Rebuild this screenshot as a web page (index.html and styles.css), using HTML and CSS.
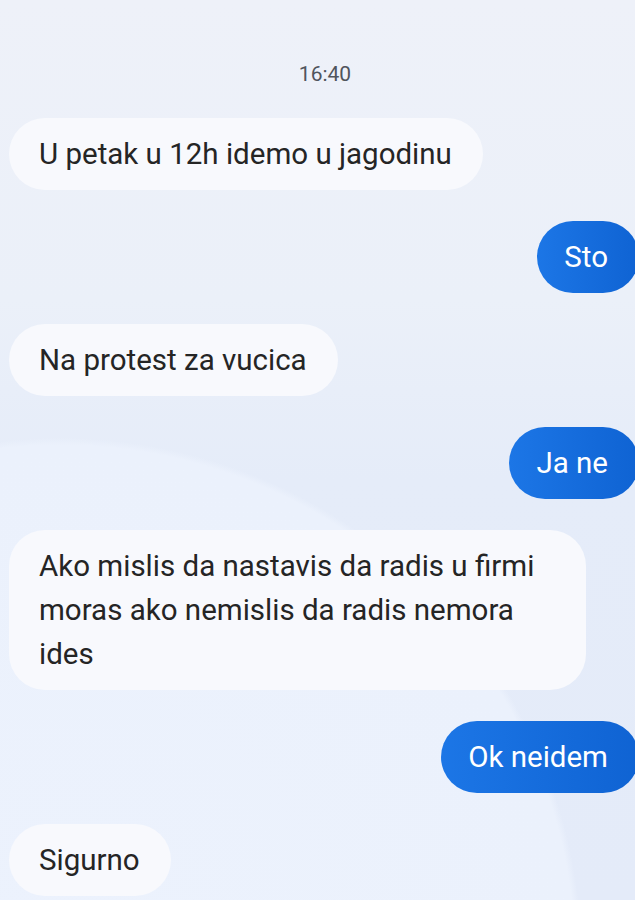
FILE: index.html
```html
<!DOCTYPE html>
<html>
<head lang="en">
    <meta charset="UTF-8">
    <title>Poruke</title>
    <link rel="stylesheet" href="styles.css">
</head>
<body>
<div id="chat">
    <div class="time">16:40</div>
    <div class="msg in">U petak u 12h idemo u jagodinu</div>
    <div class="msg out">Sto</div>
    <div class="msg in">Na protest za vucica</div>
    <div class="msg out">Ja ne</div>
    <div class="msg in">Ako mislis da nastavis da radis u firmi moras ako nemislis da radis nemora ides</div>
    <div class="msg out">Ok neidem</div>
    <div class="msg in">Sigurno</div>
</div>
</body>
</html>
```
FILE: styles.css
```css
* {
    margin: 0;
    padding: 0;
    box-sizing: border-box;
}

html, body {
    height: 100%;
}

body {
    font-family: Roboto, "Noto Sans", sans-serif;
    overflow: hidden;
    background-color: #e8eefa;
    background-image:
        radial-gradient(circle at 60px 960px, #ecf2fd 0, #ebf1fc 515px, rgba(235, 241, 252, 0) 522px),
        linear-gradient(180deg, #eef1f9 0, #ebf0f9 300px, #e5ecf9 480px, #e4ebf9 900px);
}

#chat {
    display: flex;
    flex-direction: column;
    gap: 31px;
    padding: 62px 0 0 9px;
}

.time {
    align-self: center;
    font-size: 21px;
    line-height: 24px;
    color: #50545c;
    margin-left: 6px;
    margin-bottom: 1px;
}

.msg {
    font-size: 29.5px;
    line-height: 44px;
    padding: 14px 31px 14px 30px;
    border-radius: 36px;
    max-width: 577px;
}

.msg.in {
    align-self: flex-start;
    background: #f8f9fd;
    color: #252525;
}

.msg.out {
    align-self: flex-end;
    margin-right: -4px;
    padding-left: 27px;
    color: #fff;
    background: linear-gradient(90deg, #1c76e6, #0f63d3);
}
```
